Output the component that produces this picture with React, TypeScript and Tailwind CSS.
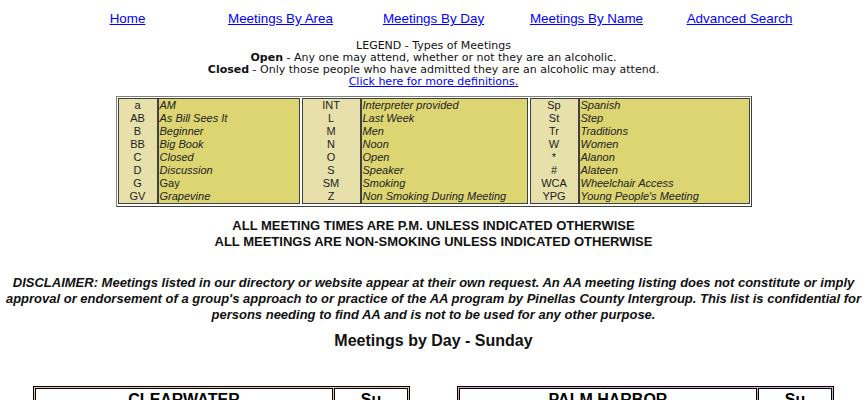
const navLinks = ["Home", "Meetings By Area", "Meetings By Day", "Meetings By Name", "Advanced Search"];

type Item = { code: string; desc: string; plain?: boolean };

const groups: Item[][] = [
  [
    { code: "a", desc: "AM" },
    { code: "AB", desc: "As Bill Sees It" },
    { code: "B", desc: "Beginner" },
    { code: "BB", desc: "Big Book" },
    { code: "C", desc: "Closed" },
    { code: "D", desc: "Discussion" },
    { code: "G", desc: "Gay", plain: true },
    { code: "GV", desc: "Grapevine" },
  ],
  [
    { code: "INT", desc: "Interpreter provided" },
    { code: "L", desc: "Last Week" },
    { code: "M", desc: "Men" },
    { code: "N", desc: "Noon" },
    { code: "O", desc: "Open" },
    { code: "S", desc: "Speaker" },
    { code: "SM", desc: "Smoking" },
    { code: "Z", desc: "Non Smoking During Meeting" },
  ],
  [
    { code: "Sp", desc: "Spanish" },
    { code: "St", desc: "Step" },
    { code: "Tr", desc: "Traditions" },
    { code: "W", desc: "Women" },
    { code: "*", desc: "Alanon" },
    { code: "#", desc: "Alateen" },
    { code: "WCA", desc: "Wheelchair Access" },
    { code: "YPG", desc: "Young People's Meeting" },
  ],
];

const widths = [
  ["w-[40px]", "w-[140px]"],
  ["w-[59px]", "w-[165px]"],
  ["w-[49px]", "w-[169px]"],
];

function LegendGroup({ items, idx }: { items: Item[]; idx: number }) {
  return (
    <div className="flex border border-[#404040]">
      <div className={`${widths[idx][0]} bg-[#e8e0aa] border-r-2 border-[#404040] flex flex-col items-center`}>
        {items.map((it) => (
          <div key={it.code} className="h-[13px] leading-[13px]">{it.code}</div>
        ))}
      </div>
      <div className={`${widths[idx][1]} bg-[#ddd572] flex flex-col pl-[1px]`}>
        {items.map((it) => (
          <div key={it.code} className={`h-[13px] leading-[13px] ${it.plain ? "" : "italic"}`}>{it.desc}</div>
        ))}
      </div>
    </div>
  );
}

function AreaTable({ name, ring }: { name: string; ring: string }) {
  return (
    <div className={`border border-black p-[1px] ${ring} flex gap-[1px]`}>
      <div className="flex-1 bg-white border border-black text-center font-bold text-[16px] leading-[22px] h-[22px]">{name}</div>
      <div className="w-[74px] bg-white border border-black text-center font-bold text-[16px] leading-[22px] h-[22px]">Su</div>
    </div>
  );
}

export default function App() {
  return (
    <div className="w-[867px] h-[400px] overflow-hidden bg-white text-black font-['Liberation_Sans',Arial,sans-serif]">
      {/* nav */}
      <div className="w-[765px] mx-auto grid grid-cols-5 pt-[11px] text-[13.4px] leading-[16px]">
        {navLinks.map((l) => (
          <div key={l} className="text-center">
            <a href="#" className="text-[#0000ff] underline">{l}</a>
          </div>
        ))}
      </div>

      {/* legend text */}
      <div className="mt-[13px] text-center text-[11px] leading-[12px] text-[#111] font-['DejaVu_Sans',Tahoma,sans-serif]">
        <div>LEGEND - Types of Meetings</div>
        <div><b>Open</b> - Any one may attend, whether or not they are an alcoholic.</div>
        <div><b>Closed</b> - Only those people who have admitted they are an alcoholic may attend.</div>
        <div><a href="#" className="text-[#0000ff] underline">Click here for more definitions.</a></div>
      </div>

      {/* legend table */}
      <div className="flex justify-center mt-[8px]">
        <div className="flex gap-[2px] border border-[#808080] border-b-[#404040] border-r-[#404040] p-[1px] pb-[2px] text-[11px] text-[#222]">
          {groups.map((g, i) => (
            <LegendGroup key={i} items={g} idx={i} />
          ))}
        </div>
      </div>

      {/* notices */}
      <div className="mt-[11px] text-center font-bold text-[13px] leading-[16px] text-[#111]">
        <div>ALL MEETING TIMES ARE P.M. UNLESS INDICATED OTHERWISE</div>
        <div>ALL MEETINGS ARE NON-SMOKING UNLESS INDICATED OTHERWISE</div>
      </div>

      <div className="mt-[25px] px-[2px] text-center font-bold italic text-[13px] leading-[16px] text-[#111]">
        DISCLAIMER: Meetings listed in our directory or website appear at their own request. An AA meeting listing does not constitute or imply approval or endorsement of a group's approach to or practice of the AA program by Pinellas County Intergroup. This list is confidential for persons needing to find AA and is not to be used for any other purpose.
      </div>

      <div className="mt-[8px] text-center font-bold text-[16px] leading-[20px] text-[#111]">Meetings by Day - Sunday</div>

      <div className="mt-[35px] flex px-[33px] gap-[47px]">
        <div className="w-[377px]">
          <AreaTable name="CLEARWATER" ring="bg-[#f8c494]" />
        </div>
        <div className="w-[377px]">
          <AreaTable name="PALM HARBOR" ring="bg-[#dca4dc]" />
        </div>
      </div>
    </div>
  );
}
